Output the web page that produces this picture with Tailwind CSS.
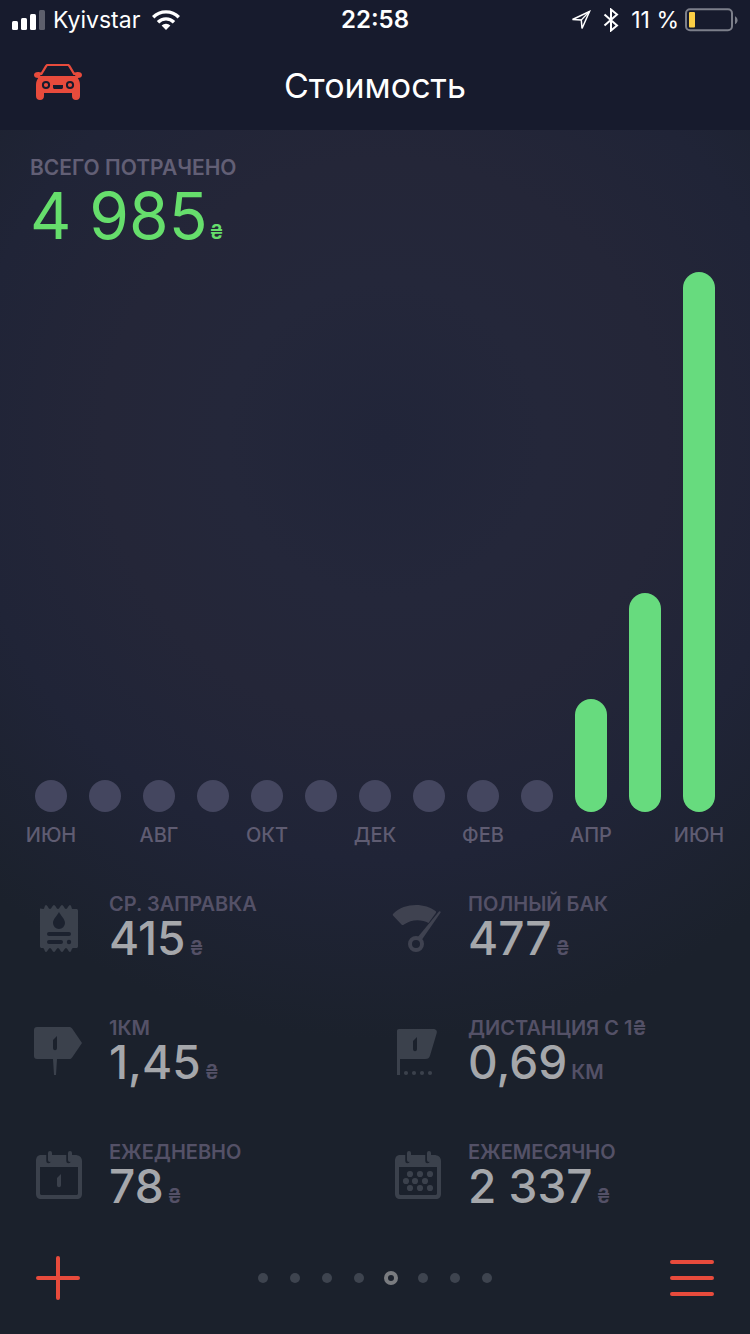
<!DOCTYPE html>
<html lang="ru">
  <head>
    <meta charset="UTF-8" />
    <meta name="viewport" content="width=device-width, initial-scale=1.0" />
    <title>Стоимость</title>
    <script src="https://cdn.jsdelivr.net/npm/@tailwindcss/browser@4"></script>
  </head>

  <body
    class="flex flex-col min-h-screen font-['Inter','Liberation_Sans',sans-serif] bg-[#1b212c] bg-[radial-gradient(circle_at_385px_440px,#212539_0px,#24273a_160px,#242638_280px,#202437_420px,#1b212c_600px)]"
  >
    <!-- Header -->
    <header class="bg-[#171b2d] text-white">
      <div class="grid grid-cols-3 items-center h-10 px-3 text-[23px]">
        <div class="flex items-center gap-2">
          <svg class="w-[33px] h-5 shrink-0" viewBox="0 0 33 20" fill="#fff">
            <rect x="0" y="11" width="6" height="9" rx="1.5" />
            <rect x="9" y="8" width="6" height="12" rx="1.5" />
            <rect x="18" y="4" width="6" height="16" rx="1.5" />
            <rect x="27" y="0" width="6" height="20" rx="1.5" opacity=".3" />
          </svg>
          <span>Kyivstar</span>
          <svg class="w-7 h-5 ml-1 shrink-0" viewBox="0 0 28 20" fill="none" stroke="#fff" stroke-width="3.4">
            <path d="M1.2 7.2a18 18 0 0 1 25.6 0" />
            <path d="M6 12.2a11.2 11.2 0 0 1 16 0" />
            <path d="M14 20l-4.4-4.400a6.200 6.200 0 0 1 8.800 0z" fill="#fff" stroke="none" />
          </svg>
        </div>
        <span class="text-center text-2xl font-semibold">22:58</span>
        <div class="flex items-center justify-end">
          <svg class="w-5 h-5 shrink-0" viewBox="0 0 20 20" fill="none" stroke="#fff" stroke-width="1.5">
            <path d="M18.500 1.500L1.500 9.500l8.800.5.700 8.500z" />
            <path d="M18.500 1.500l-8.200 8.500" stroke-width="1.2" />
          </svg>
          <svg class="w-4 h-6 mx-3 shrink-0" viewBox="0 0 16 24" fill="none" stroke="#fff" stroke-width="2">
            <path d="M1.500 6.500l12.500 11-6 5V1.500l6 5-12.500 11" />
          </svg>
          <span class="whitespace-nowrap">11 %</span>
          <svg class="w-[53px] h-6 ml-1.5 shrink-0" viewBox="0 0 53 24">
            <rect x="1" y="1.200" width="46" height="21" rx="4" fill="none" stroke="#7c7f8a" stroke-width="2" />
            <rect x="4" y="4" width="6" height="15.500" rx="1" fill="#fbce45" />
            <path d="M50 8.200c3.400 1.500 3.400 6.500 0 8z" fill="#7c7f8a" />
          </svg>
        </div>
      </div>
      <div class="grid grid-cols-[1fr_auto_1fr] items-center h-[90px] px-8">
        <button type="button" aria-label="Автомобиль" class="justify-self-start pb-2">
          <svg class="w-[52px] h-10" viewBox="0 0 52 40" fill="#e84b3c">
            <path d="M15.500 3h20.500c1.200 0 1.800.5 2.400 1.600L44 14h-2.500L36.300 5.600c-.3-.5-.5-.6-1-.6H16.200c-.5 0-.7.1-1 .6L10 14H7.500l5.600-9.400C13.800 3.500 14.300 3 15.500 3z" />
            <path d="M8 15h35.500l-2-3.200 2.700-.6c3.500-.6 5.800.5 5.800 2.800 0 2-1.500 3-4.200 3.100C47 19 48 21 48 24v11c0 2.800-1.500 4-4 4s-4-1.200-4-4v-3H12v3c0 2.800-1.500 4-4 4s-4-1.200-4-4V24c0-3 1-5 2.200-6.900C3.500 17 2 16 2 14c0-2.300 2.300-3.400 5.800-2.800l2.200.6z" />
            <circle cx="14" cy="24" r="3.100" stroke="#171b2d" stroke-width="2" />
            <circle cx="38" cy="24" r="3.100" stroke="#171b2d" stroke-width="2" />
            <path d="M21 24h10v2c0 1.500-.5 2-2 2h-6c-1.500 0-2-.5-2-2z" fill="#171b2d" />
          </svg>
        </button>
        <h1 class="text-[34px]">Стоимость</h1>
      </div>
    </header>

    <main class="flex flex-col grow">
      <!-- Total -->
      <section class="px-[30px] pt-6">
        <h2 class="text-[21px] leading-7 font-semibold text-[#625f75]">ВСЕГО ПОТРАЧЕНО</h2>
        <p class="text-[64px] leading-[68px] text-[#66de6c]">
          4 985<span class="ml-0.5 text-xl font-semibold">₴</span>
        </p>
      </section>

      <!-- Chart -->
      <ul class="flex justify-between grow items-end pt-[18px] px-[35px] text-xl leading-7 font-medium text-[#5f5c72]">
        <li class="flex flex-col items-center gap-[9px] w-8">
          <div class="w-8 rounded-full bg-[#44465f]" style="height: 32px"></div>
          <span class="h-7">ИЮН</span>
        </li>
        <li class="flex flex-col items-center gap-[9px] w-8">
          <div class="w-8 rounded-full bg-[#44465f]" style="height: 32px"></div>
          <span class="h-7"></span>
        </li>
        <li class="flex flex-col items-center gap-[9px] w-8">
          <div class="w-8 rounded-full bg-[#44465f]" style="height: 32px"></div>
          <span class="h-7">АВГ</span>
        </li>
        <li class="flex flex-col items-center gap-[9px] w-8">
          <div class="w-8 rounded-full bg-[#44465f]" style="height: 32px"></div>
          <span class="h-7"></span>
        </li>
        <li class="flex flex-col items-center gap-[9px] w-8">
          <div class="w-8 rounded-full bg-[#44465f]" style="height: 32px"></div>
          <span class="h-7">ОКТ</span>
        </li>
        <li class="flex flex-col items-center gap-[9px] w-8">
          <div class="w-8 rounded-full bg-[#44465f]" style="height: 32px"></div>
          <span class="h-7"></span>
        </li>
        <li class="flex flex-col items-center gap-[9px] w-8">
          <div class="w-8 rounded-full bg-[#44465f]" style="height: 32px"></div>
          <span class="h-7">ДЕК</span>
        </li>
        <li class="flex flex-col items-center gap-[9px] w-8">
          <div class="w-8 rounded-full bg-[#44465f]" style="height: 32px"></div>
          <span class="h-7"></span>
        </li>
        <li class="flex flex-col items-center gap-[9px] w-8">
          <div class="w-8 rounded-full bg-[#44465f]" style="height: 32px"></div>
          <span class="h-7">ФЕВ</span>
        </li>
        <li class="flex flex-col items-center gap-[9px] w-8">
          <div class="w-8 rounded-full bg-[#44465f]" style="height: 32px"></div>
          <span class="h-7"></span>
        </li>
        <li class="flex flex-col items-center gap-[9px] w-8">
          <div class="w-8 rounded-full bg-[#67db7e]" style="height: 113px"></div>
          <span class="h-7">АПР</span>
        </li>
        <li class="flex flex-col items-center gap-[9px] w-8">
          <div class="w-8 rounded-full bg-[#67db7e]" style="height: 219px"></div>
          <span class="h-7"></span>
        </li>
        <li class="flex flex-col items-center gap-[9px] w-8">
          <div class="w-8 rounded-full bg-[#67db7e]" style="height: 540px"></div>
          <span class="h-7">ИЮН</span>
        </li>
      </ul>

      <!-- Stats -->
      <dl class="grid grid-cols-2 gap-y-11 pl-8 pt-[41px]">
        <div class="flex gap-[25px] h-20">
          <svg class="w-[52px] h-[52px] mt-2.5 shrink-0" viewBox="0 0 52 52" fill="#3b414c">
            <path d="M8 8.500l3.500.5c1 0 1-4 2.500-4s2.500 4 4 4 2.500-4 4-4 2.500 4 4 4 2.500-4 4-4 2.500 4 4 4 2.500-4 4-4 1.500 4 2.500 4H44c1.500 0 2 .5 2 2v35c0 1.500-.5 2-2 2h-3c-1.500 0-1.500 4-3 4s-2.500-4-4-4-2.500 4-4 4-2.500-4-4-4-2.500 4-4 4-2.500-4-4-4-2.500 4-4 4-1.500-4-3-4h-1c-1.500 0-2-.5-2-2V10.500z" />
            <path d="M27 12c2 4 6 7 6 11a6 6 0 0 1-12 0c0-4 4-7 6-11z" fill="#1c222f" />
            <path d="M17 34h20M17 42h12" stroke="#1c222f" stroke-width="4" stroke-linecap="round" />
            <circle cx="37" cy="42" r="2.200" fill="#1c222f" />
          </svg>
          <div>
            <dt class="text-xl leading-7 font-semibold text-[#545167]">СР. ЗАПРАВКА</dt>
            <dd class="text-[46px] leading-10 font-medium text-[#a5a7ab]">
              415<span class="ml-1 text-xl font-semibold text-[#545167]">₴</span>
            </dd>
          </div>
        </div>
        <div class="flex gap-[25px] h-20">
          <svg class="w-[52px] h-[52px] mt-2.5 shrink-0" viewBox="0 0 52 52" fill="#3f4250">
            <path d="M2.500 13.500C13 2.500 34 2.500 44.500 11c.8.600.8 1.200.3 2L37.500 23c-7-4-17-4-24.500 1.500-1 .8-1.800.8-2.500 0L2 15.500c-.5-.8-.2-1.300.5-2z" />
            <path d="M48 11.500c1-.6 2 .2 1.500 1.300L30 41l-4-3z" />
            <circle cx="25" cy="44" r="6" fill="none" stroke="#3f4250" stroke-width="4" />
          </svg>
          <div>
            <dt class="text-xl leading-7 font-semibold text-[#545167]">ПОЛНЫЙ БАК</dt>
            <dd class="text-[46px] leading-10 font-medium text-[#a5a7ab]">
              477<span class="ml-1 text-xl font-semibold text-[#545167]">₴</span>
            </dd>
          </div>
        </div>
        <div class="flex gap-[25px] h-20">
          <svg class="w-[52px] h-[52px] mt-2.5 shrink-0" viewBox="0 0 52 52" fill="#3b414c">
            <path d="M5 3h32c1.500 0 2.500.5 3.300 1.800L50 19l-9.700 14.200C39.500 34.500 38.500 35 37 35H5c-2 0-3-1-3-3V6c0-2 1-3 3-3z" />
            <path d="M21 35h4l-1 16h-2z" />
            <path d="M25 12v12c0 3-4 3-4 0v-8z" fill="#1b212c" />
          </svg>
          <div>
            <dt class="text-xl leading-7 font-semibold text-[#545167]">1КМ</dt>
            <dd class="text-[46px] leading-10 font-medium text-[#a5a7ab]">
              1,45<span class="ml-1 text-xl font-semibold text-[#545167]">₴</span>
            </dd>
          </div>
        </div>
        <div class="flex gap-[25px] h-20">
          <svg class="w-[52px] h-[52px] mt-2.5 shrink-0" viewBox="0 0 52 52" fill="#3b414c">
            <path d="M8 5h34c3 0 4.500 1.500 3.600 4.500l-6.400 21.500c-1 3-2 4-5 4H9v16H6V7c0-1.300.7-2 2-2z" />
            <path d="M26 13v12c0 3-4 3-4 0v-8z" fill="#1b212c" />
            <circle cx="15" cy="49" r="2.100" />
            <circle cx="23" cy="49" r="2.100" />
            <circle cx="31" cy="49" r="2.100" />
            <circle cx="39" cy="49" r="2.100" />
          </svg>
          <div>
            <dt class="text-xl leading-7 font-semibold text-[#545167]">ДИСТАНЦИЯ С 1₴</dt>
            <dd class="text-[46px] leading-10 font-medium text-[#a5a7ab]">
              0,69<span class="ml-1 text-xl font-semibold text-[#545167]">КМ</span>
            </dd>
          </div>
        </div>
        <div class="flex gap-[25px] h-20">
          <svg class="w-[52px] h-[52px] mt-2.5 shrink-0" viewBox="0 0 52 52" fill="#3b414c">
            <path fill-rule="evenodd" d="M9 7h34c4 0 7 2 7 6v33c0 3-2 5-5 5H9c-3 0-5-2-5-5V13c0-4 2-6 5-6zM8 19v26c0 1.500.5 2 2 2h34c1.500 0 2-.5 2-2V19z" />
            <path d="M16.500 5v8M36.500 5v8" stroke="#1b212c" stroke-width="4.500" stroke-linecap="round" />
            <path d="M18 5v7M38 5v7" stroke="#3b414c" stroke-width="4" stroke-linecap="round" />
            <path d="M29 26v11c0 3-4 3-4 0v-7z" />
          </svg>
          <div>
            <dt class="text-xl leading-7 font-semibold text-[#545167]">ЕЖЕДНЕВНО</dt>
            <dd class="text-[46px] leading-10 font-medium text-[#a5a7ab]">
              78<span class="ml-1 text-xl font-semibold text-[#545167]">₴</span>
            </dd>
          </div>
        </div>
        <div class="flex gap-[25px] h-20">
          <svg class="w-[52px] h-[52px] mt-2.5 shrink-0" viewBox="0 0 52 52" fill="#3b414c">
            <path fill-rule="evenodd" d="M9 7h34c4 0 7 2 7 6v33c0 3-2 5-5 5H9c-3 0-5-2-5-5V13c0-4 2-6 5-6zM8 19v26c0 1.500.5 2 2 2h34c1.500 0 2-.5 2-2V19z" />
            <path d="M16.500 5v8M36.500 5v8" stroke="#1b212c" stroke-width="4.500" stroke-linecap="round" />
            <path d="M18 5v7M38 5v7" stroke="#3b414c" stroke-width="4" stroke-linecap="round" />
            <circle cx="19" cy="26" r="3.100" />
            <circle cx="29" cy="26" r="3.100" />
            <circle cx="39" cy="26" r="3.100" />
            <circle cx="15" cy="33" r="3.100" />
            <circle cx="24" cy="33" r="3.100" />
            <circle cx="34" cy="33" r="3.100" />
            <circle cx="19" cy="40" r="3.100" />
            <circle cx="29" cy="40" r="3.100" />
            <circle cx="39" cy="40" r="3.100" />
          </svg>
          <div>
            <dt class="text-xl leading-7 font-semibold text-[#545167]">ЕЖЕМЕСЯЧНО</dt>
            <dd class="text-[46px] leading-10 font-medium text-[#a5a7ab]">
              2 337<span class="ml-1 text-xl font-semibold text-[#545167]">₴</span>
            </dd>
          </div>
        </div>
      </dl>
    </main>

    <!-- Bottom bar -->
    <footer class="flex items-center justify-between px-9 pt-[38px] pb-[34px]">
      <button type="button" aria-label="Добавить">
        <svg class="w-11 h-11" viewBox="0 0 44 44" stroke="#e84b3c" stroke-width="4" stroke-linecap="round">
          <path d="M22 2v40M2 22h40" />
        </svg>
      </button>
      <div class="flex items-center gap-[22px]">
        <span class="size-2.5 rounded-full bg-[#3e444f]"></span>
        <span class="size-2.5 rounded-full bg-[#3e444f]"></span>
        <span class="size-2.5 rounded-full bg-[#3e444f]"></span>
        <span class="size-2.5 rounded-full bg-[#3e444f]"></span>
        <span class="size-3.5 -mx-0.5 rounded-full border-4 border-[#7a7c80]"></span>
        <span class="size-2.5 rounded-full bg-[#3e444f]"></span>
        <span class="size-2.5 rounded-full bg-[#3e444f]"></span>
        <span class="size-2.5 rounded-full bg-[#3e444f]"></span>
      </div>
      <button type="button" aria-label="Меню">
        <svg class="w-11 h-11" viewBox="0 0 44 44" stroke="#e84b3c" stroke-width="4" stroke-linecap="round">
          <path d="M2 6h40M2 22h40M2 38h40" />
        </svg>
      </button>
    </footer>
  </body>
</html>
